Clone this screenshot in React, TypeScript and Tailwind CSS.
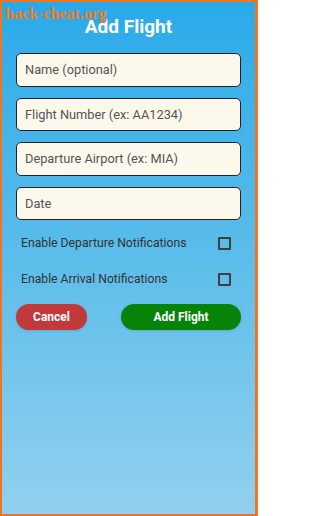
import { useState } from "react";

const fields = [
  "Name (optional)",
  "Flight Number (ex: AA1234)",
  "Departure Airport (ex: MIA)",
  "Date",
];

function CheckRow({ label }: { label: string }) {
  const [checked, setChecked] = useState(false);
  return (
    <label className="flex items-center justify-between pl-[5px] pr-[10px] h-9 cursor-pointer">
      <span className="text-[12.2px] text-[#333]">{label}</span>
      <span
        onClick={() => setChecked(!checked)}
        className="w-[13px] h-[13px] border-2 border-[#3f3f46] rounded-[1px] flex items-center justify-center text-[9px] leading-none"
      >
        {checked ? "✓" : ""}
      </span>
    </label>
  );
}

export default function App() {
  return (
    <div
      className="relative w-[258px] h-[516px] border-l-2 border-t-2 border-b-2 border-r-[3px] border-[#f4731f] bg-gradient-to-b from-[#27aae9] via-[#5bbdea] to-[#91d0ee] overflow-hidden"
      style={{ fontFamily: "Roboto, 'Liberation Sans', sans-serif" }}
    >
      <div
        className="absolute left-[3px] top-[4px] text-[16px] font-bold text-[#f47a20] leading-none"
        style={{ fontFamily: "'Liberation Serif', 'DejaVu Serif', serif" }}
      >
        hack-cheat.org
      </div>
      <h1 className="text-center text-white font-bold text-[19px] pt-[15px] leading-5">Add Flight</h1>
      <div className="flex flex-col gap-[11px] px-[14px] mt-[16px]">
        {fields.map((f) => (
          <input
            key={f}
            placeholder={f}
            className="h-[33.5px] w-full rounded-[5px] border-[1.5px] border-[#222] bg-[#fdf8ec] px-[8px] text-[12.8px] text-[#333] placeholder:text-[#555] outline-none"
          />
        ))}
      </div>
      <div className="flex flex-col px-[14px] mt-[5px]">
        <CheckRow label="Enable Departure Notifications" />
        <CheckRow label="Enable Arrival Notifications" />
      </div>
      <div className="flex justify-between px-[14px] mt-[7px]">
        <button className="w-[71px] h-[26px] rounded-full bg-[#c1393a] text-white font-bold text-[12px] shadow-sm">
          Cancel
        </button>
        <button className="w-[120px] h-[26px] rounded-full bg-[#078407] text-white font-bold text-[12px] shadow-sm">
          Add Flight
        </button>
      </div>
    </div>
  );
}
